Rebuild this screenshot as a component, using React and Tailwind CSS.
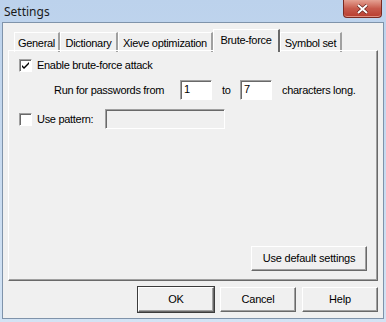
import React from 'react';

const raised = 'border border-t-white border-l-white border-r-[#696969] border-b-[#696969] shadow-[inset_-1px_-1px_0_#a0a0a0]';
const sunken = 'border border-t-[#a0a0a0] border-l-[#a0a0a0] border-r-white border-b-white shadow-[inset_1px_1px_0_#696969]';

const Check = ({ checked }) => (
    <div className={`w-[13px] h-[13px] bg-white ${sunken} flex items-center justify-center shrink-0`}>
        {checked && (
            <svg width="7" height="7" viewBox="0 0 7 7">
                <path d="M0 3 L2 5 L7 0 L7 2 L2 7 L0 5 Z" fill="#000" />
            </svg>
        )}
    </div>
);

const Button = ({ children, w = 'w-[76px]', def = false }) => (
    <div
        className={`${w} h-[25px] bg-[#f0f0f0] flex items-center justify-center text-[11px] tracking-[-0.2px] text-black whitespace-nowrap shrink-0 ${
            def ? 'outline outline-1 outline-[#3c3c3c] ' : ''
        }${raised}`}
    >
        {children}
    </div>
);

const Tab = ({ label, w, active }) =>
    active ? (
        <div className={`${w} relative z-10 h-[23px] pt-[3px] text-center bg-[#f0f0f0] border-t border-l border-t-white border-l-white border-r-2 border-r-[#696969] text-[11px] tracking-[-0.3px] leading-[15px] whitespace-nowrap shrink-0`}>
            {label}
        </div>
    ) : (
        <div className={`${w} h-[20px] mt-[3px] pt-[3px] text-center border-t border-l border-t-white border-l-white border-r-2 border-r-[#a0a0a0] text-[11px] tracking-[-0.3px] leading-[15px] whitespace-nowrap shrink-0`}>
            {label}
        </div>
    );

export default function App() {
    return (
        <div
            className="w-[386px] h-[322px] flex flex-col bg-gradient-to-b from-[#bcd2ec] to-[#d3e3f4] text-black"
            style={{ fontFamily: '"Liberation Sans", Arial, sans-serif' }}
        >
            <div className="h-[22px] flex justify-between items-start pl-[4px] pr-[4px] shrink-0">
                <span className="text-[12px] mt-[3px] text-[#1a1a1a]" style={{ fontFamily: '"Noto Sans", sans-serif' }}>
                    Settings
                </span>
                <div className="w-[39px] h-[18px] rounded-b-[4px] border border-t-0 border-[#7a2a22] bg-gradient-to-b from-[#e4a193] via-[#c75a4c] to-[#b83c2e] flex items-center justify-center shadow-[inset_0_-1px_0_#e08f80]">
                    <svg width="11" height="10" viewBox="0 0 11 10">
                        <path d="M1 1 L10 9 M10 1 L1 9" stroke="#5a1a14" strokeWidth="3.2" />
                        <path d="M1 1 L10 9 M10 1 L1 9" stroke="#fff" strokeWidth="2" />
                    </svg>
                </div>
            </div>
            <div className="flex-1 mx-[2px] mb-[3px] border border-[#7f93aa] bg-[#f0f0f0] flex flex-col px-[5px] pt-[6px] pb-[5px]">
                <div className="flex pl-[6px] h-[22px] items-start">
                    <Tab label="General" w="w-[46px]" />
                    <Tab label="Dictionary" w="w-[58px]" />
                    <Tab label="Xieve optimization" w="w-[95px]" />
                    <Tab label="Brute-force" w="w-[67px]" active />
                    <Tab label="Symbol set" w="w-[62px]" />
                </div>
                <div className="-mt-px h-[231px] border border-t-white border-l-white border-r-[#696969] border-b-[#696969] shadow-[inset_-1px_-1px_0_#a0a0a0] flex flex-col text-[11px] tracking-[-0.3px] pl-[10px] pr-[10px] pt-[8px] pb-[9px] whitespace-nowrap">
                    <div className="flex items-center gap-[5px] h-[13px]">
                        <Check checked />
                        <span>Enable brute-force attack</span>
                    </div>
                    <div className="flex items-center mt-[8px] pl-[35px] h-[20px]">
                        <span className="w-[126px] shrink-0">Run for passwords from</span>
                        <div className={`w-[32px] h-[20px] shrink-0 bg-white ${sunken} pl-[3px] leading-[17px]`}>1</div>
                        <span className="ml-[10px] w-[18px] shrink-0">to</span>
                        <div className={`w-[32px] h-[20px] shrink-0 bg-white ${sunken} pl-[3px] leading-[17px]`}>7</div>
                        <span className="ml-[10px]">characters long.</span>
                    </div>
                    <div className="flex items-center mt-[9px] h-[20px]">
                        <Check />
                        <span className="ml-[5px] w-[68px] shrink-0">Use pattern:</span>
                        <div className={`w-[120px] h-[20px] shrink-0 bg-[#f0f0f0] ${sunken}`} />
                    </div>
                    <div className="flex-1" />
                    <div className="flex justify-end">
                        <Button w="w-[116px]">Use default settings</Button>
                    </div>
                </div>
                <div className="flex justify-end gap-[6px] mt-[6px]">
                    <Button def>OK</Button>
                    <Button>Cancel</Button>
                    <Button>Help</Button>
                </div>
            </div>
        </div>
    );
}
